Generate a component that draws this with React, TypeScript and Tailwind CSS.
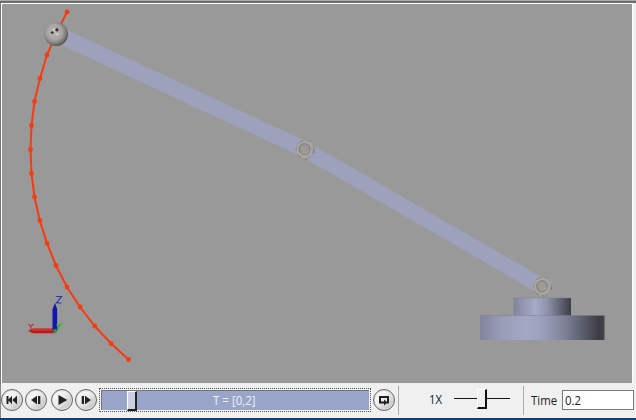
import React from "react";

const trail: [number, number][] = [
  [67, 12], [56, 34], [47, 55], [40, 78.5], [34.5, 101.5], [31.5, 125.5], [30.5, 149.5], [31.5, 173.5],
  [34.5, 197], [39.8, 220.5], [47, 243.3], [56, 265.5], [67, 287], [80, 307], [94.7, 326], [111, 343.5], [128.5, 359.5],
];

function Joint({ x, y }: { x: number; y: number }) {
  return (
    <g transform={`translate(${x} ${y})`}>
      <circle r="9.2" fill="#a09e9b" />
      <circle r="9" fill="none" stroke="#85827c" strokeWidth="1" strokeDasharray="5 4 2 7" />
      <circle r="7.4" fill="none" stroke="#aba8a2" strokeWidth="1.5" />
      <circle cx="-0.5" cy="-0.5" r="5.2" fill="#9c9a97" stroke="#7c7974" strokeWidth="1" />
      <path d="M-3 3A5 5 0 0 0 4 1" fill="none" stroke="#b0aca5" />
      <path d="M8 1l2 2M0 9l2 1" stroke="#77736c" />
    </g>
  );
}

function Scene() {
  return (
    <svg className="block h-[379px] w-[630px]" viewBox="2 4 630 379">
      <defs>
        <linearGradient id="base">
          <stop offset="0" stopColor="#81849a" />
          <stop offset=".18" stopColor="#999db7" />
          <stop offset=".38" stopColor="#a3a8c4" />
          <stop offset=".5" stopColor="#9a9fba" />
          <stop offset=".68" stopColor="#7e8298" />
          <stop offset=".86" stopColor="#535562" />
          <stop offset=".96" stopColor="#3a3b43" />
          <stop offset="1" stopColor="#45464c" />
        </linearGradient>
        <linearGradient id="hub">
          <stop offset="0" stopColor="#81859a" />
          <stop offset=".38" stopColor="#a7abc7" />
          <stop offset=".6" stopColor="#8c90a8" />
          <stop offset=".88" stopColor="#555764" />
          <stop offset="1" stopColor="#3b3d46" />
        </linearGradient>
        <radialGradient id="ball" cx=".43" cy=".42" r=".6">
          <stop offset="0" stopColor="#bbbab6" />
          <stop offset=".55" stopColor="#a4a39f" />
          <stop offset=".85" stopColor="#777571" />
          <stop offset="1" stopColor="#494844" />
        </radialGradient>
      </defs>
      <path d="M57 34L306 150" stroke="#9da1bb" strokeWidth="16" />
      <path d="M306 150L543 287" stroke="#9da1bb" strokeWidth="15.5" />
      <path d="M513.5 298h57.5v18h-57.5z" fill="url(#hub)" />
      <path d="M480 315.5h124.5V340H480z" fill="url(#base)" />
      <path d="M480 315.5h124.5M513.5 298h57" stroke="#787b8e" strokeOpacity=".45" />
      <Joint x={305} y={149.5} />
      <Joint x={542.5} y={286.5} />
      <polyline points={trail.map((p) => p.join(",")).join(" ")} fill="none" stroke="#f53b10" strokeWidth="2" />
      {trail.map(([x, y]) => <circle key={y} cx={x} cy={y} r="2.4" fill="#f53b10" />)}
      <circle cx="56" cy="34" r="12" fill="url(#ball)" />
      <path d="M50.5 32.5l2-1.5 1.5 2-2 1zM55 29l3-1 .5 3-2.5.5z" fill="#30342e" />
      <path d="M53 30l2-1M56.5 34l2 .5" stroke="#d9ddd5" strokeWidth="1.5" />
      <path d="M28 331l5-2.4h22v4.6H33z" fill="#bc1719" />
      <path d="M32 330h22" stroke="#e24545" />
      <path d="M52.5 331V309l2.5-6 2.2 6v22z" fill="#1515b5" />
      <circle cx="55" cy="331" r="2" fill="#19a32d" />
      <path d="M56.5 324.5l2 2 3-3M58.5 326.5v3" fill="none" stroke="#20ba20" strokeWidth="1.3" />
      <path d="M28.5 324l2.3 2.5 2.7-2.5M30.8 326.5v3" fill="none" stroke="#bd3434" strokeWidth="1.2" />
      <path d="M56 296.5h5.5l-5 6.5h5" fill="none" stroke="#3434b0" strokeWidth="1.2" />
    </svg>
  );
}

function RoundButton({ label, children }: { label: string; children: React.ReactNode }) {
  return (
    <button aria-label={label} className="flex size-[22px] shrink-0 items-center justify-center rounded-full border border-[#666] bg-[linear-gradient(135deg,#fff,#eee_45%,#b5b5b5)] shadow-[inset_0_0_0_1px_#ddd]">
      <svg width="20" height="20" viewBox="-10 -10 20 20" fill="#222">{children}</svg>
    </button>
  );
}

export default function App() {
  return (
    <div className="flex h-[420px] w-[636px] flex-col overflow-hidden bg-[#f0f0f0] font-['Open_Sans','Noto_Sans',sans-serif] text-[12px] text-[#222]">
      <div className="h-px shrink-0 bg-[#aaa]" />
      <div className="h-[2px] shrink-0 bg-[#6d6d6d]" />
      <div className="flex h-[380px] shrink-0 border-l border-[#777]">
        <main className="w-[632px] shrink-0 border-t border-r border-l border-white bg-[#999]"><Scene /></main>
      </div>
      <footer className="flex h-[35px] shrink-0 border-l border-[#888]">
        <div className="flex w-[98px] shrink-0 pt-[6px]">
          <RoundButton label="Go to start"><path d="M-5.5-4h2v8h-2zM0-4.3v8.6L-4 0zM5-4.3v8.6L.2 0z" /></RoundButton>
          <div className="ml-[2px]"><RoundButton label="Step back"><path d="M1-4.3v8.6L-5 0zM2-4h2.3v8H2z" /></RoundButton></div>
          <div className="ml-[4px]"><RoundButton label="Play"><path d="M-3.5-5v10L5.3 0z" /></RoundButton></div>
          <div className="ml-[2px]"><RoundButton label="Step forward"><path d="M-4.3-4h2.3v8h-2.3zM-1-4.3v8.6L5 0z" /></RoundButton></div>
        </div>
        <div className="mt-[5px] h-[24px] w-[272px] shrink-0 border border-dotted border-[#555] p-px">
          <div className="flex h-full border-t border-l border-[#777] bg-[#98a5c8]">
            <div className="ml-[25px] h-[20px] w-[10px] shrink-0 border-t border-r-2 border-b-2 border-l border-t-white border-r-[#222] border-b-[#222] border-l-white bg-[#cbd0df]" />
            <div className="flex h-[19px] flex-1 items-center pl-[76px] text-[#eef1fa]"><span className="inline-block origin-left scale-x-[.96] whitespace-nowrap">T = [0,2]</span></div>
          </div>
        </div>
        <div className="ml-[2px] pt-[6px]">
          <RoundButton label="Repeat"><path d="M-2 2.5h-2v-5.5H4v5.5H2.5" fill="none" stroke="#222" strokeWidth="2" /><path d="M-2.5 1.6H0V-.6L3.4 2.5 0 5.6V3.5h-2.5z" /></RoundButton>
        </div>
        <div className="mt-[3px] ml-[3px] h-[29px] w-px shrink-0 bg-[#aaa]" />
        <div className="mt-[7px] ml-[30px] w-[25px] shrink-0 leading-[20px]"><span className="inline-block origin-left scale-x-[.94]">1X</span></div>
        <div className="mt-[6px] flex h-[20px] w-[56px] shrink-0 items-center">
          <div className="mb-px h-px w-[23px] bg-[#111]" />
          <div className="h-[20px] w-[10px] border-t border-r-2 border-b-2 border-l border-t-white border-r-[#111] border-b-[#111] border-l-white bg-[#f0f0f0]" />
          <div className="mb-px h-px w-[23px] bg-[#111]" />
        </div>
        <div className="mt-[3px] ml-[13px] h-[29px] w-px shrink-0 bg-[#aaa]" />
        <label className="mt-[8px] ml-[7px] w-[31px] shrink-0 leading-[20px]"><span className="inline-block origin-left scale-x-[.95]">Time</span></label>
        <div className="mt-[7px] h-[20px] w-[72px] shrink-0 border border-[#7a7a7a] bg-white pl-[2px] leading-[19px]"><span className="inline-block origin-left scale-x-[.95]">0.2</span></div>
      </footer>
      <div className="h-[2px] shrink-0 bg-[#0b3e85]" />
    </div>
  );
}
